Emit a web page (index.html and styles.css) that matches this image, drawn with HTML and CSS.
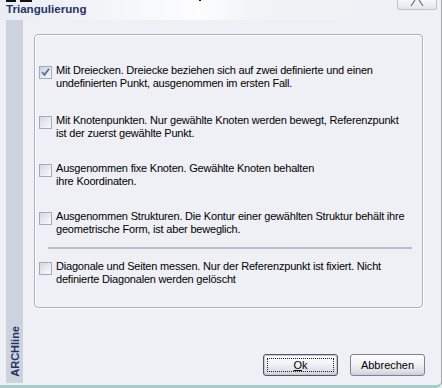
FILE: index.html
```html
<!DOCTYPE html>
<html lang="de">
<head>
<meta charset="utf-8">
<title>Triangulierung</title>
<link rel="stylesheet" href="styles.css">
</head>
<body>
<div class="window">
  <div class="marks"><span class="mark m1"></span><span class="mark m2"></span><span class="mark m3"></span></div>
  <header class="titlebar">
    <h1 class="title">Triangulierung</h1>
    <div class="close-btn">
      <svg width="38" height="9" viewBox="0 0 38 9"><path d="M17 0 L13 6 M21 0 L25 6" stroke="#6b6f7c" stroke-width="1.2" fill="none"/></svg>
    </div>
  </header>
  <div class="main">
    <aside class="sidebar"><span class="brand">ARCHline</span></aside>
    <section class="content">
      <div class="groupbox">
        <label class="option">
          <span class="cb checked"><svg width="11" height="11" viewBox="0 0 11 11"><path d="M2 5 L4.5 7.8 L9 1.8" stroke="#5a6d96" stroke-width="1.8" fill="none"/></svg></span>
          <span class="text">Mit Dreiecken. Dreiecke beziehen sich auf zwei definierte und einen<br>undefinierten Punkt, ausgenommen im ersten Fall.</span>
        </label>
        <label class="option o2">
          <span class="cb"></span>
          <span class="text">Mit Knotenpunkten. Nur gewählte Knoten werden bewegt, Referenzpunkt<br>ist der zuerst gewählte Punkt.</span>
        </label>
        <label class="option o3">
          <span class="cb"></span>
          <span class="text">Ausgenommen fixe Knoten. Gewählte Knoten behalten<br>ihre Koordinaten.</span>
        </label>
        <label class="option o4">
          <span class="cb"></span>
          <span class="text">Ausgenommen Strukturen. Die Kontur einer gewählten Struktur behält ihre<br>geometrische Form, ist aber beweglich.</span>
        </label>
        <hr class="sep">
        <label class="option">
          <span class="cb"></span>
          <span class="text">Diagonale und Seiten messen. Nur der Referenzpunkt ist fixiert. Nicht<br>definierte Diagonalen werden gelöscht</span>
        </label>
      </div>
      <div class="buttons">
        <button class="btn default"><span class="focus"><u>O</u>k</span></button>
        <button class="btn">Abbrechen</button>
      </div>
    </section>
  </div>
</div>
</body>
</html>
```

FILE: styles.css
```css
* { box-sizing: border-box; }
html, body {
  margin: 0;
  padding: 0;
  background: #eff0f5;
}
body {
  width: 442px;
  height: 388px;
  overflow: hidden;
  font-family: "Liberation Sans", Arial, sans-serif;
  font-size: 11px;
  color: #000;
}
.window {
  position: relative;
  width: 442px;
  height: 388px;
  border-right: 1px solid #a3a7b2;
  border-bottom: 3px solid #a3cdc6;
  border-bottom-right-radius: 6px;
  display: flex;
  flex-direction: column;
}
.marks .mark {
  position: absolute;
  top: 0;
  height: 2px;
  background: #111;
}
.marks .m1 { left: 6px; width: 10px; }
.marks .m2 { left: 20px; width: 12px; }
.marks .m3 { left: 199px; width: 2px; height: 1px; }
.titlebar {
  height: 20px;
  display: flex;
  align-items: flex-start;
  background: linear-gradient(90deg, #e9ecf3 0%, #f3f5f9 25%, #fdfdfe 45%, #f1f3f7 58%, #eef0f5 100%);
}
.title {
  margin: 2px 0 0 6px;
  font-size: 11.6px;
  font-weight: bold;
  line-height: 14px;
  color: #1f3466;
}
.close-btn {
  margin-left: auto;
  margin-right: 4px;
  width: 40px;
  height: 10px;
  border: 1px solid #bfc3cc;
  border-top: none;
  border-radius: 0 0 3px 3px;
  background: linear-gradient(#f6f7f9, #e4e6ec);
  display: flex;
  justify-content: center;
}
.close-btn svg { display: block; }
.main {
  height: 365px;
  display: flex;
}
.sidebar {
  margin-left: 6px;
  margin-bottom: 2px;
  width: 17px;
  background: #cdd2df;
  display: flex;
  flex-direction: column;
  justify-content: flex-end;
  align-items: center;
  padding-bottom: 6px;
}
.brand {
  writing-mode: vertical-rl;
  transform: rotate(180deg);
  font-weight: bold;
  font-size: 11px;
  color: #1f3466;
  line-height: 12px;
}
.content {
  flex: 1;
  padding: 14px 16px 0 11px;
}
.groupbox {
  height: 274px;
  margin-right: 2px;
  border: 1px solid #adb1be;
  border-radius: 4px;
  box-shadow: inset 1px 1px 0 #fff, 1px 1px 0 #fff;
  padding: 29px 0 0 4px;
}
.option {
  display: flex;
  gap: 4px;
  line-height: 13px;
}
.o2 { margin-top: 24px; }
.o3, .o4 { margin-top: 22px; }
.cb {
  flex: none;
  width: 13px;
  height: 13px;
  margin-top: 2px;
  border: 1px solid #a2abbc;
  background: linear-gradient(135deg, #d3d7e1 0%, #e9ebf1 55%, #fbfbfc 100%);
  display: flex;
  align-items: center;
  justify-content: center;
}
.cb.checked {
  background: linear-gradient(135deg, #cbd1e0 0%, #e4e8f0 55%, #f7f8fb 100%);
}
.cb svg { display: block; }
.text {
  white-space: nowrap;
  letter-spacing: -0.2px;
}
.sep {
  margin: 11px 10px 11px 9px;
  height: 2px;
  border: none;
  background: #b9bccb;
}
.buttons {
  margin-top: 46px;
  display: flex;
  justify-content: flex-end;
  gap: 12px;
}
.btn {
  width: 75px;
  height: 22px;
  padding: 0;
  font-family: "Liberation Sans", Arial, sans-serif;
  font-size: 11px;
  color: #000;
  border: 1px solid #7d8292;
  border-radius: 3px;
  background: linear-gradient(#fdfdfe 0%, #f1f2f5 45%, #dcdee6 85%, #c9ccd6 100%);
  display: flex;
  align-items: center;
  justify-content: center;
}
.btn.default {
  border-color: #4f5566;
  box-shadow: inset 0 0 0 1px #c4cad8;
  padding: 3px;
}
.focus {
  width: 100%;
  height: 100%;
  border: 1px dotted #222;
  display: flex;
  align-items: center;
  justify-content: center;
}
```
